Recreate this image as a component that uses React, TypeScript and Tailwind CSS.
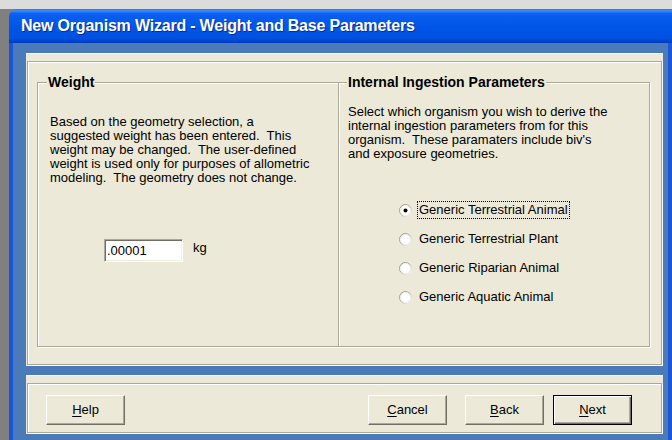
import React from "react";

const font = { fontFamily: '"Liberation Sans", Arial, sans-serif' };

function Radio({ checked }: { checked?: boolean }) {
  const id = checked ? "rg-on" : "rg-off";
  return (
    <svg width="13" height="13" viewBox="0 0 13 13" className="shrink-0">
      <defs>
        <linearGradient id={id} x1="0" y1="0" x2="1" y2="1">
          <stop offset="0" stopColor="#8a877a" />
          <stop offset="0.5" stopColor="#b9b6a8" />
          <stop offset="1" stopColor="#ffffff" />
        </linearGradient>
      </defs>
      <circle cx="6.5" cy="6.5" r="6" fill="#ffffff" stroke={`url(#${id})`} strokeWidth="1" />
      <circle cx="6.5" cy="6.5" r="5" fill="none" stroke="#e9e7de" strokeWidth="0.8" />
      {checked && <circle cx="6.5" cy="6.5" r="2" fill="#000000" />}
    </svg>
  );
}

function Button({ k, rest, primary }: { k: string; rest: string; primary?: boolean }) {
  const base =
    "w-[79px] h-[30px] flex items-center justify-center text-[13px] text-black bg-[#ece9d8] shrink-0";
  const cls = primary
    ? `${base} border border-black shadow-[inset_1px_1px_0_#ffffff,inset_-1px_-1px_0_#716f64,inset_-2px_-2px_0_#aca899]`
    : `${base} border border-t-white border-l-white border-b-[#716f64] border-r-[#716f64] shadow-[inset_-1px_-1px_0_#aca899]`;
  return (
    <div className={cls} style={font}>
      <span>
        <span className="underline underline-offset-[2px]">{k}</span>
        {rest}
      </span>
    </div>
  );
}

export default function App() {
  const options = [
    "Generic Terrestrial Animal",
    "Generic Terrestrial Plant",
    "Generic Riparian Animal",
    "Generic Aquatic Animal",
  ];

  return (
    <div className="w-[672px] h-[440px] bg-[#dcdcdc] flex flex-col overflow-hidden" style={font}>
      <div className="h-[9px] shrink-0" />
      <div className="flex flex-1 bg-[#808080]">
        <div className="w-[9px] shrink-0" />
        {/* window */}
        <div className="flex-1 flex flex-col rounded-tl-[8px] overflow-hidden">
          {/* title bar */}
          <div className="h-[34px] shrink-0 flex items-center pl-[12px] bg-[linear-gradient(to_bottom,#2b74f2_0%,#3d8cf8_5%,#0a5ff0_14%,#0056e8_50%,#0051e0_86%,#0039c0_100%)]">
            <span className="text-white font-bold text-[16px] tracking-[-0.2px] [text-shadow:1px_1px_0_#0a2a8c] leading-none pb-[1px]">
              New Organism Wizard - Weight and Base Parameters
            </span>
          </div>

          <div className="flex flex-1">
            <div className="w-[4px] bg-[#1a56d8] shrink-0" />
            {/* client area */}
            <div className="flex-1 bg-[#4b7ab8] pt-[10px] pl-[13px] pr-[5px] flex flex-col">
              {/* top panel */}
              <div className="h-[313px] bg-[#ece9d8] pt-[8px] px-[1px] pb-[1px] flex flex-col shadow-[inset_0_1px_0_#f8f7f1]">
                <div className="flex-1 border border-[#aca899] shadow-[inset_1px_1px_0_#ffffff,1px_1px_0_#ffffff] pl-[9px] pr-[11px] pt-[20px] pb-[17px] flex">
                  {/* Weight group */}
                  <div className="relative w-[302px] border border-[#aca899] shadow-[inset_1px_1px_0_#ffffff,1px_1px_0_#ffffff] pl-[12px] pt-[32px]">
                    <span className="absolute top-[-10px] left-[9px] px-[1px] bg-[#ece9d8] font-bold text-[14px] leading-[18px] text-black">
                      Weight
                    </span>
                    <p className="text-[13px] leading-[14px] text-black">
                      Based on the geometry selection, a
                      <br />
                      suggested weight has been entered.&nbsp; This
                      <br />
                      weight may be changed.&nbsp; The user-defined
                      <br />
                      weight is used only for purposes of allometric
                      <br />
                      modeling.&nbsp; The geometry does not change.
                    </p>
                    <div className="flex items-start mt-[54px] ml-[54px]">
                      <div className="w-[79px] h-[23px] bg-white border border-t-[#aca899] border-l-[#aca899] border-b-white border-r-white shadow-[inset_1px_1px_0_#716f64,inset_-1px_-1px_0_#f1efe2] flex items-center pl-[2px] text-[13px] text-black">
                        .00001
                      </div>
                      <span className="ml-[10px] pt-[1px] text-[13px] leading-[16px] text-black">kg</span>
                    </div>
                  </div>

                  {/* Internal ingestion group */}
                  <div className="relative flex-1 border border-l-0 border-[#aca899] shadow-[inset_0_1px_0_#ffffff,1px_1px_0_#ffffff] pl-[9px] pt-[22px]">
                    <span className="absolute top-[-10px] left-[8px] px-[1px] bg-[#ece9d8] font-bold text-[14px] leading-[18px] text-black">
                      Internal Ingestion Parameters
                    </span>
                    <p className="text-[13px] leading-[14px] text-black">
                      Select which organism you wish to derive the
                      <br />
                      internal ingestion parameters from for this
                      <br />
                      organism.&nbsp; These paramaters include biv's
                      <br />
                      and exposure geometries.
                    </p>
                    <div className="mt-[40px] ml-[51px] flex flex-col gap-[11px]">
                      {options.map((o, i) => (
                        <div key={o} className="h-[18px] flex items-center gap-[5px]">
                          <Radio checked={i === 0} />
                          <span
                            className={`text-[13px] leading-[16px] text-black px-[1px] border border-dotted ${
                              i === 0 ? "border-black" : "border-transparent"
                            }`}
                          >
                            {o}
                          </span>
                        </div>
                      ))}
                    </div>
                  </div>
                </div>
              </div>

              {/* bottom panel */}
              <div className="mt-[9px] h-[59px] bg-[#ece9d8] pt-[8px] px-[1px] pb-[1px] flex flex-col shadow-[inset_0_1px_0_#f8f7f1]">
                <div className="flex-1 border border-[#aca899] shadow-[inset_1px_1px_0_#ffffff,1px_1px_0_#ffffff] pl-[18px] pr-[29px] pt-[11px] flex items-start justify-between">
                  <Button k="H" rest="elp" />
                  <div className="flex items-start">
                    <Button k="C" rest="ancel" />
                    <div className="ml-[18px]">
                      <Button k="B" rest="ack" />
                    </div>
                    <div className="ml-[9px]">
                      <Button k="N" rest="ext" primary />
                    </div>
                  </div>
                </div>
              </div>
            </div>
            <div className="w-[4px] bg-[#1a56d8] shrink-0" />
          </div>
        </div>
      </div>
    </div>
  );
}
